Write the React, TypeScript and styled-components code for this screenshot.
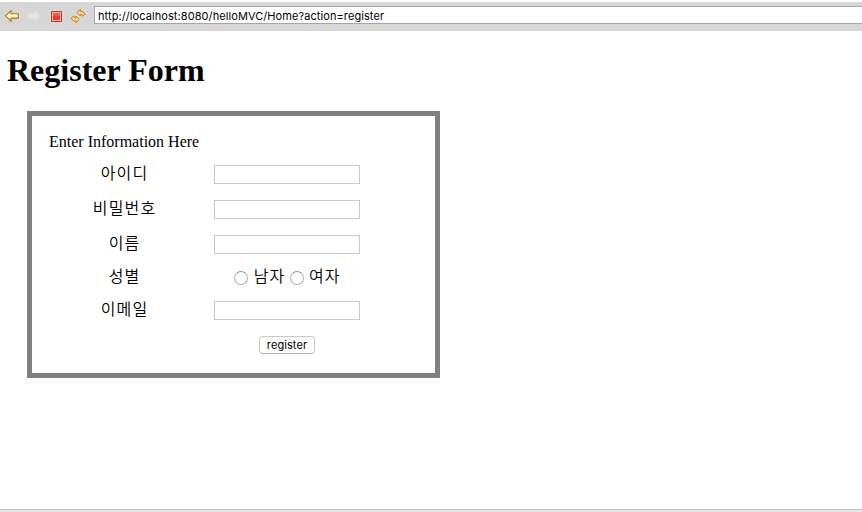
import React from "react";
import styled, { createGlobalStyle } from "styled-components";

const GlobalStyle = createGlobalStyle`
  * { box-sizing: border-box; }
  body { margin: 0; background: #fff; color: #000; overflow: hidden; }
`;

const Window = styled.div`
  height: 512px;
  padding-top: 2px;
  display: flex;
  flex-direction: column;
`;

const Toolbar = styled.header`
  flex: none;
  height: 29px;
  background: #d6d6d6;
  display: flex;
  align-items: flex-start;
  padding: 4px 0 0 4px;
`;

const Tools = styled.div`
  width: 90px;
  height: 20px;
  display: flex;
  gap: 6px;
  svg { display: block; width: 16px; height: 20px; }
`;

const Address = styled.div`
  flex: 1;
  height: 18px;
  border: 1px solid #a6a6a6;
  border-right: 0;
  background: #fff;
  padding-left: 3px;
  font: 11px/18px Inter, "Liberation Sans", sans-serif;
  letter-spacing: 0.08px;
  white-space: nowrap;
`;

const Page = styled.main`
  flex: 1;
  font-family: "Liberation Serif", "Noto Sans CJK KR", serif;
  font-size: 16px;
`;

const Title = styled.h1`
  margin: 21px 0 22px 7px;
  font-size: 32px;
  line-height: 37px;
  font-weight: bold;
`;

const Panel = styled.form`
  margin-left: 27px;
  width: 413px;
  height: 267px;
  border: 5px solid #808080;
  padding: 17px;
`;

const Legend = styled.div`
  height: 24px;
  line-height: 18px;
`;

const Row = styled.div<{ $height?: number }>`
  display: grid;
  grid-template-columns: 150px 176px;
  height: ${(p) => p.$height ?? 35}px;
  align-items: center;
  justify-items: center;
`;

const Korean = styled.span`
  font: 350 16px/20px "Noto Sans CJK KR", sans-serif;
  letter-spacing: 1.2px;
  margin-right: -1.2px;
`;

const Label = styled(Korean).attrs({ as: "label" })`
  padding-bottom: 5px;
`;

const TextInput = styled.input`
  width: 146px;
  height: 19px;
  margin: 0;
  padding: 1px;
  border: 1px solid #c8c8c8;
  border-radius: 0;
  background: #fff;
  outline: none;
`;

const Choices = styled.div`
  display: flex;
  align-items: center;
  gap: 5.3px;
  padding: 0 0 5px 0;
`;

const Radio = styled.input.attrs({ type: "radio" })`
  appearance: none;
  width: 14px;
  height: 14px;
  margin: 5px 0 0;
  border: 1px solid #b0b0b0;
  border-top-color: #999;
  border-radius: 50%;
  background: #fff;
  &:checked { box-shadow: inset 0 0 0 3px #fff; background: #333; }
`;

const Submit = styled.button`
  width: 56px;
  height: 18px;
  margin-bottom: 1px;
  padding: 0;
  border: 1px solid #c9c9c9;
  border-bottom-color: #b0b0b0;
  border-radius: 4px;
  background: #fff;
  color: #000;
  font: 11px/16px Inter, "Liberation Sans", sans-serif;
  letter-spacing: 0.08px;
`;

const StatusEdge = styled.footer`
  flex: none;
  height: 3px;
  border-top: 1px solid #c1c1c1;
  background: #e7e7e7;
`;

const Tool = ({ children }: { children: React.ReactNode }) => (
  <svg viewBox="0 0 16 20" aria-hidden="true">{children}</svg>
);

export default function App() {
  return (
    <>
      <GlobalStyle />
      <Window>
        <Toolbar>
          <Tools>
            <Tool>
              <path d="M1.5 9.8 7 4.7v3h7.3v4.4H7v3z" fill="#fff3bd" stroke="#ad7418" strokeWidth="1.1" />
              <path d="M3 10h10.5" stroke="#fffbe6" />
            </Tool>
            <Tool>
              <path d="M14.2 9.8 9 4.7v3H2v4.4h7v3z" fill="#e6e6e6" stroke="#dedede" />
            </Tool>
            <Tool>
              <path d="M3.5 5.5h10v10h-10z" fill="#f5b3a8" stroke="#b43b35" />
              <path d="M5 7h7v7H5z" fill="#e63c35" />
              <path d="M5 7h7v3H5z" fill="#ed5a50" />
            </Tool>
            <Tool>
              <path d="M7 6.6 10.3 3.5V5.2C12.8 5.1 14.4 6.3 14.7 8.4L12.6 10.2C12.4 8.8 11.8 8.2 10.3 8.2V9.9z" fill="#ffdf78" stroke="#b97a1c" />
              <path d="M9.2 13.6 5.9 16.8V15.1C3.3 15.1 1.8 13.9 1.4 11.8L3.5 10C3.8 11.4 4.4 12 5.9 12V10.3z" fill="#ffdf78" stroke="#b97a1c" />
            </Tool>
          </Tools>
          <Address>http://localhost:8080/helloMVC/Home?action=register</Address>
        </Toolbar>
        <Page>
          <Title>Register Form</Title>
          <Panel onSubmit={(e) => e.preventDefault()}>
            <Legend>Enter Information Here</Legend>
            <Row><Label>아이디</Label><TextInput /></Row>
            <Row><Label>비밀번호</Label><TextInput type="password" /></Row>
            <Row><Label>이름</Label><TextInput /></Row>
            <Row $height={31}>
              <Label>성별</Label>
              <Choices>
                <Radio name="gender" /><Korean>남자</Korean>
                <Radio name="gender" /><Korean>여자</Korean>
              </Choices>
            </Row>
            <Row><Label>이메일</Label><TextInput /></Row>
            <Row><span /><Submit>register</Submit></Row>
          </Panel>
        </Page>
        <StatusEdge />
      </Window>
    </>
  );
}
